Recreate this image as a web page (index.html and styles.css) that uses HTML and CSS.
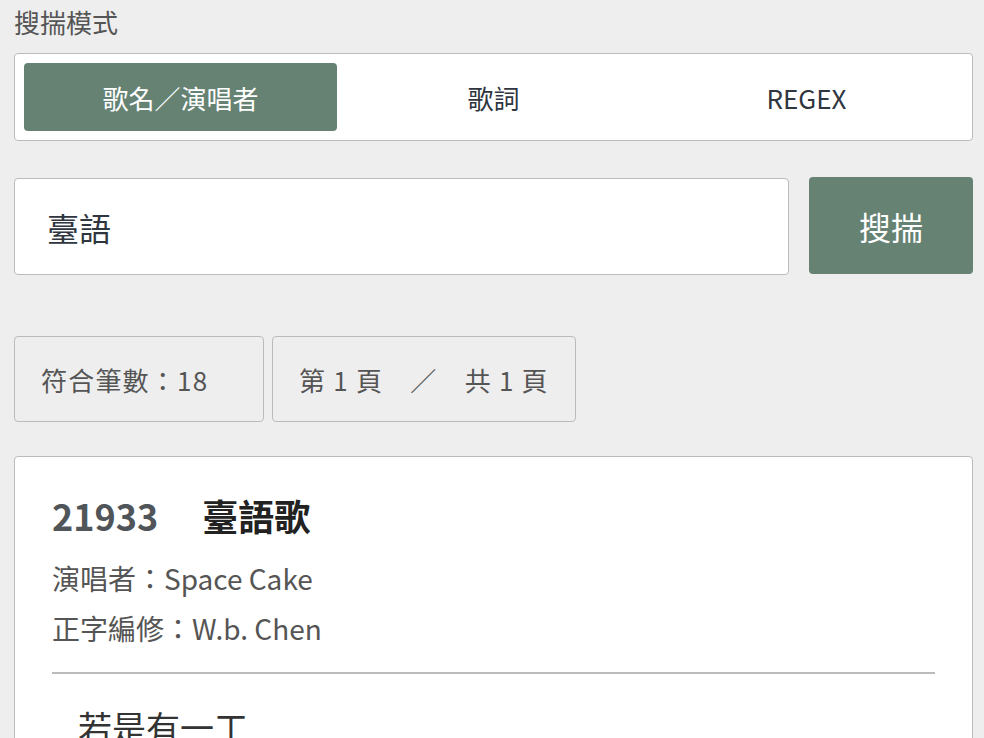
FILE: index.html
```html
<!DOCTYPE html>
<html lang="zh-Hant">
<head>
    <meta charset="UTF-8">
    <meta name="viewport" content="width=device-width, initial-scale=1.0">
    <title>搜揣</title>
    <link rel="stylesheet" href="styles.css">
</head>
<body>
    <div class="page">
        <div class="field-label">搜揣模式</div>
        <div class="mode-box">
            <button class="mode-btn active">歌名／演唱者</button>
            <button class="mode-btn">歌詞</button>
            <button class="mode-btn">REGEX</button>
        </div>

        <form class="search-row" onsubmit="return false;">
            <input class="search-input" type="text" value="臺語">
            <button class="search-btn" type="submit">搜揣</button>
        </form>

        <div class="stats">
            <div class="stat stat-count">符合筆數：18</div>
            <div class="stat">第 1 頁　／　共 1 頁</div>
        </div>

        <div class="card">
            <h2 class="song-title"><span class="song-id">21933</span>臺語歌</h2>
            <div class="meta">演唱者：Space Cake</div>
            <div class="meta">正字編修：W.b. Chen</div>
            <hr class="divider">
            <div class="lyrics">若是有一工</div>
        </div>
    </div>
</body>
</html>
```

FILE: styles.css
```css
body {
    margin: 0;
    background-color: #eeeeee;
    font-family: "Noto Sans CJK TC", "Noto Sans", sans-serif;
    color: #333;
}
.page {
    padding: 0 11px 0 14px;
}
.field-label {
    font-size: 26px;
    color: #555;
    line-height: 36px;
    padding-top: 4px;
}
.mode-box {
    margin-top: 13px;
    display: grid;
    grid-template-columns: 1fr 1fr 1fr;
    padding: 9px;
    background: #fff;
    border: 1px solid #bbb;
    border-radius: 4px;
}
.mode-btn {
    height: 68px;
    font-family: inherit;
    font-size: 26px;
    color: #2f3640;
    background: none;
    border: none;
    border-radius: 4px;
    cursor: pointer;
}
.mode-btn.active {
    background-color: #658273;
    color: #fff;
}
.search-row {
    display: flex;
    gap: 20px;
    margin-top: 37px;
}
.search-input {
    flex: 1;
    height: 97px;
    box-sizing: border-box;
    padding: 0 32px;
    font-family: inherit;
    font-size: 32px;
    color: #2f3640;
    background: #fff;
    border: 1px solid #bbb;
    border-radius: 4px;
    outline: none;
}
.search-btn {
    width: 164px;
    height: 97px;
    margin-top: -1px;
    font-family: inherit;
    font-size: 32px;
    color: #fff;
    background-color: #658273;
    border: none;
    border-radius: 4px;
    cursor: pointer;
}
.stats {
    display: flex;
    gap: 8px;
    margin-top: 61px;
}
.stat {
    box-sizing: border-box;
    height: 86px;
    padding: 0 26px;
    display: flex;
    align-items: center;
    font-size: 26px;
    letter-spacing: 1.2px;
    color: #555;
    border: 1px solid #bbb;
    border-radius: 4px;
}
.stat-count {
    width: 250px;
}
.card {
    margin-top: 34px;
    padding: 30px 37px 40px;
    background: #fff;
    border: 1px solid #bbb;
    border-radius: 4px;
}
.song-title {
    margin: 0 0 10px;
    font-size: 36px;
    font-weight: bold;
    color: #222;
    line-height: 56px;
}
.song-id {
    color: #4f5559;
    margin-right: 44px;
}
.meta {
    font-size: 28px;
    color: #555;
    line-height: 50px;
}
.divider {
    margin: 19px 0 0;
    border: none;
    border-top: 2px solid #bbb;
}
.lyrics {
    padding: 28px 26px;
    font-size: 34px;
    color: #333;
}
```
